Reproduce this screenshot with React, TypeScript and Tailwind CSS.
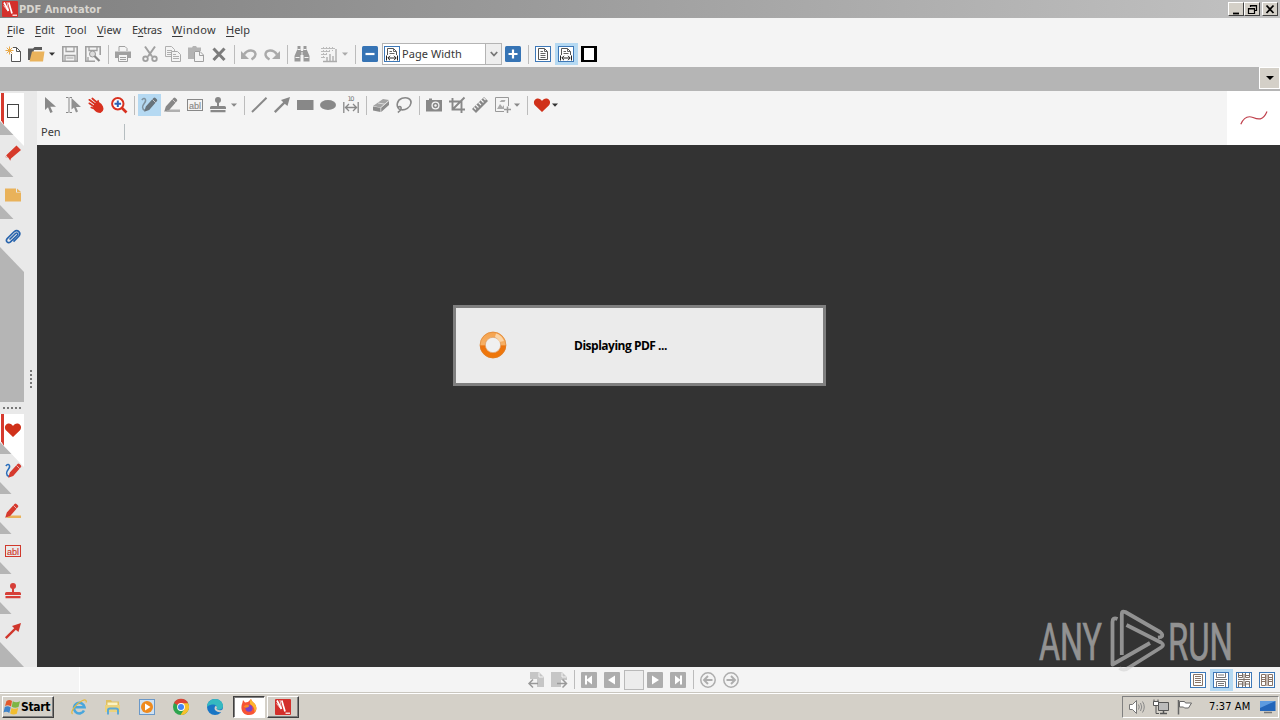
import React from "react";

type BoxProps = { children?: React.ReactNode; className?: string };

const Icon = ({ children, className = "" }: BoxProps) => (
  <svg viewBox="0 0 16 16" className={`h-4 w-4 shrink-0 overflow-visible ${className}`} fill="none">
    {children}
  </svg>
);

const Sep = () => <div className="-mr-px h-[19px] w-px shrink-0 bg-[#bcbcbc]" />;

const Caret = ({ className = "" }: BoxProps) => (
  <svg viewBox="0 0 6 4" className={`h-1 w-1.5 shrink-0 ${className}`}>
    <path d="M0 0.5h6L3 3.8z" fill="currentColor" />
  </svg>
);

const Active = ({ children }: BoxProps) => (
  <div className="-mr-1 -ml-[3px] flex h-[22px] w-[23px] shrink-0 items-center bg-[#b5d9f2] pl-[3px]">
    {children}
  </div>
);

const HEART = "M8 15L1.2 8.500C-.8 6.300-.3 3.100 2 2 4.300 1 6.800 1.900 8 4.100 9.200 1.900 11.700 1 14 2c2.300 1.100 2.800 4.300.8 6.500z";

const Logo = ({ className = "" }: BoxProps) => (
  <svg viewBox="0 0 16 16" className={`shrink-0 ${className}`} fill="none">
    <rect width="16" height="16" rx="1" fill="#d3302b" />
    <path d="M2 1.500l4.500 8.500M6.800 1.500l3.200 11" stroke="#fff" strokeWidth="1.700" />
    <path d="M5 1l1.500 9M1.500 4.500L6 10" stroke="#fff" strokeWidth=".7" />
    <path d="M10.500 14.200H15" stroke="#fff" strokeWidth="1.200" />
  </svg>
);

const PageIcon = ({ wide = false }: { wide?: boolean }) => (
  <Icon>
    <rect x=".5" y=".5" width="15" height="15" fill="#fff" stroke="#3d78b8" />
    <path d={wide ? "M3.500 9V2.500h6l3 3V9" : "M3.500 2.500h6l3 3v8h-9z"} stroke="#555" />
    <path d="M9.500 2.500v3h3M5.500 5.500h2.500M5.500 7.500h5" stroke="#666" />
    {wide ? (
      <path d="M2.500 9.500v5M13.500 9.500v5M4 12h8M6 9.800L3.800 12 6 14.200M10 9.800l2.200 2.200L10 14.200" stroke="#222" />
    ) : (
      <path d="M5.500 9.500h5M5.500 11.500h5" stroke="#666" />
    )}
  </Icon>
);

const AblIcon = ({ color }: { color: string }) => (
  <Icon>
    <rect x=".5" y="2.500" width="15" height="11" stroke={color} />
    <text x="2" y="11.500" fontSize="9" fontFamily="Liberation Sans, sans-serif" fill={color} stroke={color} strokeWidth=".15" textLength="12">
      abl
    </text>
  </Icon>
);

const StampIcon = ({ color }: { color: string }) => (
  <Icon>
    <circle cx="8" cy="3" r="3" fill={color} />
    <path d="M7 5h2v4h5.500q1.500 0 1.500 1.500V12H0v-1.500Q0 9 1.500 9H7zM.5 13h15v2.200H.5z" fill={color} />
  </Icon>
);

const PencilIcon = ({ color, line, wave }: { color: string; line?: string; wave?: string }) => (
  <Icon>
    {line && <path d="M5 12.500h11v2.500H1z" fill={line} />}
    {wave && <path d="M.8 3C4-.5 5.800 3 3.500 6S.5 12 4 13.500" stroke={wave} strokeWidth="1.500" />}
    <g transform={line ? "translate(-3 0)" : undefined}>
      <path d="M4.800 9.500L12.500 1q1-1 2 0l1.300 1.300q1 1 0 2L8.200 13 3.200 14.800z" fill={color} />
      <path d="M11.500 2.500l3.200 3.200" stroke="#f0e8e8" strokeWidth=".7" />
    </g>
  </Icon>
);

const ArrowIcon = ({ color }: { color: string }) => (
  <Icon>
    <path d="M.8 15.200L11 5" stroke={color} strokeWidth="2.400" />
    <path d="M16 0l-2.500 9-2.500-2-2-2-2-2z" fill={color} />
  </Icon>
);

const Menu = ({ label, u, className }: { label: string; u: number; className: string }) => (
  <div className={`shrink-0 whitespace-nowrap ${className}`}>
    {label.slice(0, u)}
    <span className="underline decoration-1 underline-offset-2">{label[u]}</span>
    {label.slice(u + 1)}
  </div>
);

function TitleBar() {
  return (
    <div className="flex h-[18px] items-center bg-linear-to-r from-[#808080] to-[#c2c2c2] pl-[2px]">
      <Logo className="h-4 w-4" />
      <div className="mt-px ml-px h-4 w-40 whitespace-nowrap font-['DejaVu_Sans_Condensed','DejaVu_Sans',sans-serif] text-[11px] leading-4 font-bold text-[#d8d5cf]">
        PDF Annotator
      </div>
      <div className="mr-[2px] ml-auto flex h-[14px]">
        {["M3 9.500h6", "M4.500 3V1.500h6v5H9M4.500 2h6M2.500 4.500h6v5h-6zM2.500 5h6", "M2.500 1.500l7 7.500M9.500 1.500l-7 7.500"].map((d, i) => (
          <div
            key={d}
            className={`flex h-[14px] w-4 items-center justify-center border border-t-white border-r-[#404040] border-b-[#404040] border-l-white bg-[#d4d0c8] ${i === 2 ? "ml-[2px]" : ""}`}
          >
            <svg viewBox="0 0 12 11" className="h-[11px] w-3" fill="none">
              <path d={d} stroke="#000" strokeWidth={i === 1 ? 1.2 : 1.8} />
            </svg>
          </div>
        ))}
      </div>
    </div>
  );
}

function MenuBar() {
  return (
    <div className="flex h-6 items-center pl-[7px] font-['Noto_Sans',sans-serif] text-[11px] text-[#383838]">
      <Menu label="File" u={0} className="w-7" />
      <Menu label="Edit" u={0} className="w-[30px]" />
      <Menu label="Tool" u={0} className="w-8" />
      <Menu label="View" u={0} className="w-[35px]" />
      <Menu label="Extras" u={1} className="w-10 tracking-[-0.35px]" />
      <Menu label="Window" u={0} className="w-[54px] tracking-[0.4px]" />
      <Menu label="Help" u={0} className="w-8" />
    </div>
  );
}

function MainToolbar() {
  return (
    <div className="flex h-[25px] items-center gap-[7px] pb-px pl-[5px]">
      {/* new */}
      <Icon>
        <path d="M6.500 8v7.500h9v-10l-4-4H8" fill="#fff" stroke="#555" />
        <path d="M11.500 1.500v4h4" stroke="#555" />
        <path d="M4.500.5v8M.5 4.500h8M1.700 1.700l5.600 5.600M7.300 1.700L1.700 7.300" stroke="#e9a846" />
      </Icon>
      {/* open */}
      <Icon>
        <path d="M0 14V2.500h5L6.500 1H14v3H6L3 14z" fill="#5b5b5b" />
        <path d="M4 5.500H16.500L15 15.500H1.500z" fill="#eab35c" />
      </Icon>
      <Caret className="-ml-0.5 text-[#333]" />
      {/* save */}
      <Icon>
        <path d="M.8.8h14.400v14.400H.8z" stroke="#a0a0a0" strokeWidth="1.600" />
        <path d="M4 1v4.500h8V1M3 15V9.500h10V15" stroke="#a0a0a0" strokeWidth="1.300" />
        <path d="M4.500 12h7" stroke="#a0a0a0" />
      </Icon>
      <Icon>
        <path d="M15.200 9V.8H.8v14.400H10" stroke="#a0a0a0" strokeWidth="1.600" />
        <path d="M4 1v3.500h8V1M3 15v-4" stroke="#a0a0a0" strokeWidth="1.300" />
        <circle cx="7.500" cy="8" r="3" fill="#ddd" stroke="#999" />
        <path d="M9.500 10l5 5" stroke="#888" strokeWidth="2.200" />
      </Icon>
      <Sep />
      {/* print */}
      <Icon>
        <path d="M4 5V.5h6l2 2V5" stroke="#a0a0a0" />
        <path d="M0 5.500h16V12h-3V9H3v3H0z" fill="#a0a0a0" />
        <path d="M3.500 9v6.500h9V9M5 11.500h6M5 13.500h6" stroke="#a0a0a0" />
      </Icon>
      {/* cut */}
      <Icon className="ml-1">
        <path d="M3 .5l7 10M13 .5l-7 10" stroke="#a0a0a0" strokeWidth="2" />
        <circle cx="3.500" cy="12.800" r="2.300" stroke="#a0a0a0" strokeWidth="1.800" />
        <circle cx="12.500" cy="12.800" r="2.300" stroke="#a0a0a0" strokeWidth="1.800" />
      </Icon>
      {/* copy */}
      <Icon>
        <path d="M.5.5h6l3 3v7h-9zM2 4.500h5M2 6.500h5M2 8.500h4" stroke="#b0b0b0" />
        <path d="M6.500 5.500h6l3 3v7h-9z" fill="#f4f4f4" stroke="#aaa" />
        <path d="M8 8.500h3M8 10.500h6M8 12.500h6" stroke="#b0b0b0" />
      </Icon>
      {/* paste */}
      <Icon>
        <path d="M0 1.500h4L5 0h3l1 1.500h4V5H6v8H0z" fill="#b4b4b4" />
        <path d="M6.500 5.500h5.500l3.500 3.500v6.500h-9z" fill="#f4f4f4" stroke="#a0a0a0" />
        <path d="M11.500 5.500v4h4" stroke="#a0a0a0" />
      </Icon>
      <Icon>
        <path d="M2.500 2.500l11 11.500M13.500 2.500L2.500 14" stroke="#7c7c7c" strokeWidth="3" />
      </Icon>
      <Sep />
      <Icon>
        <path d="M3 8.500C7 2.500 14 4 14.500 8c.2 2.500-1.500 4-4 5.500" stroke="#aaa" strokeWidth="2.400" />
        <path d="M0 5v8h8z" fill="#aaa" />
      </Icon>
      <Icon>
        <path d="M13 8.500C9 2.500 2 4 1.500 8c-.2 2.500 1.500 4 4 5.500" stroke="#aaa" strokeWidth="2.400" />
        <path d="M16 5v8H8z" fill="#aaa" />
      </Icon>
      <Sep />
      {/* find */}
      <Icon>
        <path d="M3.500 0h3v3L7 5h2l.5-2V0h3v3l3 7v5.500h-6V9h-3v6.500h-6V10l3-7z" fill="#999" />
        <path d="M1.500 11.500h4M10.500 11.500h4M3.500 3.500h3M9.500 3.500h3M8 6v3" stroke="#f4f4f4" />
      </Icon>
      <Icon className="ml-1">
        <path d="M0 2.500h14M0 5.500h9M0 8.500h6M0 11.500h4M2.500 1v12M5.500 1v9M8.500 1v6M11.500 1v4" stroke="#bbb" strokeDasharray="2 1" />
        <path d="M6 15v-4M9 15V8M12 15v-5M15 15V3M2 15.500h14" stroke="#aaa" strokeWidth="1.300" />
      </Icon>
      <Caret className="-ml-0.5 text-[#aaa]" />
      <Sep />
      <Icon>
        <rect width="16" height="16" rx="1.500" fill="#3674b5" />
        <path d="M3.500 8h9" stroke="#fff" strokeWidth="2.200" />
      </Icon>
      {/* zoom combo */}
      <div className="-ml-[3px] flex h-[22px] w-[120px] shrink-0 items-center border border-[#b4b4b4] bg-white pl-px">
        <PageIcon wide />
        <div className="ml-[2px] w-[83px] whitespace-nowrap font-['Noto_Sans',sans-serif] text-[11px] tracking-[0.05px] text-[#383838]">Page Width</div>
        <div className="flex h-full w-4 shrink-0 items-center justify-center border-l border-[#b4b4b4] bg-[#eee]">
          <svg viewBox="0 0 8 6" className="h-1.5 w-2" fill="none">
            <path d="M.8 1L4 4.500 7.200 1" stroke="#777" strokeWidth="1.800" />
          </svg>
        </div>
      </div>
      <Icon className="-ml-1">
        <rect width="16" height="16" rx="1.500" fill="#3674b5" />
        <path d="M3.500 8h9M8 3.500v9" stroke="#fff" strokeWidth="2.200" />
      </Icon>
      <Sep />
      <PageIcon />
      <Active>
        <PageIcon wide />
      </Active>
      <div className="h-4 w-4 border-2 border-x-[3px] border-black bg-white" />
    </div>
  );
}

function AnnotationToolbar() {
  return (
    <div className="flex h-7 items-center gap-[7px] pl-[5px]">
      <Icon>
        <path d="M3 0v13l3-2.700L8.300 16l2.400-1L8.300 9.800H14z" fill="#888" />
      </Icon>
      <Icon>
        <path d="M1 .5h2.500M4.500.5H7M4 1v14M1 15.500h2.500M4.500 15.500H7" stroke="#888" />
        <path d="M6.500 1v11.500l2.500-2 2 5 2-1-2-4.500H16z" fill="#909090" />
      </Icon>
      {/* hand */}
      <Icon>
        <path d="M1.300 2.800L7 7M1.300 6.300L6 9.500M3.300 10.500L7 12M4.300 1.500L9 5.500" stroke="#d8301f" strokeWidth="1.700" strokeLinecap="round" />
        <path d="M6.500 6.500L8.500 5 10 2.800q1.300.2 1 2.200 3 1.500 4 4.500 1 2-.2 4.500L12.500 16q-4 0-6.300-3L5 9.500z" fill="#d8301f" />
      </Icon>
      {/* magnifier */}
      <Icon>
        <circle cx="6.800" cy="6.800" r="5.700" fill="#fff" stroke="#d8301f" strokeWidth="2" />
        <path d="M11 11l4.500 4.500" stroke="#d8301f" strokeWidth="2.600" />
        <path d="M6.800 3.500v6.600M3.500 6.800h6.600" stroke="#2c62b5" strokeWidth="2" />
      </Icon>
      <Sep />
      <Active>
        <PencilIcon color="#68737b" wave="#7f919d" />
      </Active>
      <PencilIcon color="#888" line="#b0b0b0" />
      <AblIcon color="#888" />
      <StampIcon color="#888" />
      <Caret className="-ml-0.5 text-[#888]" />
      <Sep />
      <Icon>
        <path d="M1 15L15.500.8" stroke="#888" strokeWidth="2" />
      </Icon>
      <ArrowIcon color="#888" />
      <Icon>
        <rect y="3" width="16.500" height="10" fill="#888" />
      </Icon>
      <Icon>
        <ellipse cx="8" cy="8" rx="8" ry="5" fill="#888" />
      </Icon>
      {/* dimension */}
      <Icon>
        <path d="M.8 5v11M15.200 5v11M2 10.500h12M6 7l-3.500 3.500L6 14M10 7l3.500 3.500L10 14" stroke="#888" strokeWidth="1.300" />
        <text x="4.500" y="3.500" fontSize="6.500" fontFamily="DejaVu Sans, sans-serif" fill="#777" textLength="7">
          10
        </text>
      </Icon>
      <Sep />
      {/* eraser */}
      <Icon>
        <path d="M0 9L10 2l6 1-8.500 7.500z" fill="#a4a4a4" />
        <path d="M0 9.500l7.500 1.300V15L0 13.500zM8.200 10.800L16 4v4l-7.800 7z" fill="#8c8c8c" />
        <path d="M5 6l7 1.200" stroke="#ddd" />
      </Icon>
      {/* lasso */}
      <Icon>
        <path d="M3.500 12.500C-.5 9 1 3 6 1.300 11-.3 15.500 2 15 6c-.5 4-5.500 8-11 6.500-2-.6-2.200-3-.4-3 2.400.1 2 4-1.800 6" stroke="#888" strokeWidth="1.600" />
      </Icon>
      <Sep />
      {/* camera */}
      <Icon>
        <path d="M0 3h3V1.500h3V3h10v11.500H0z" fill="#888" />
        <circle cx="9.500" cy="8.500" r="3.400" fill="#888" stroke="#f4f4f4" strokeWidth="1.300" />
        <circle cx="9.500" cy="8.500" r="1.200" fill="#f4f4f4" />
      </Icon>
      {/* crop */}
      <Icon>
        <path d="M3.500 1v11.500H16M0 4.500h12.500V16M4 12L15.500.5" stroke="#888" strokeWidth="1.900" />
      </Icon>
      {/* ruler */}
      <Icon>
        <path d="M0 12L12 0l4 4L4 16z" fill="#888" />
        <path d="M4 8l2.500 2.500M6.500 5.500L9 8M9 3l2.500 2.500M11.500 1L13.500 3M2 10.500l2 2" stroke="#f4f4f4" strokeWidth="1.100" />
      </Icon>
      {/* insert image */}
      <Icon>
        <path d="M9 14.500H.5V.5h13V9" stroke="#999" />
        <path d="M2 12l3-5 2.500 3L9 8v4zM10.500 3h-4l-2 2h5z" fill="#aaa" />
        <path d="M12.500 9.500V16M9 12.500h7" stroke="#999" strokeWidth="1.500" />
      </Icon>
      <Caret className="-ml-1 text-[#888]" />
      <Sep />
      <Icon>
        <path d={HEART} fill="#d0311a" />
      </Icon>
      <Caret className="-ml-[5px] text-[#333]" />
    </div>
  );
}

const Tab = ({ children, className = "" }: BoxProps) => (
  <div className={`flex h-[53px] w-6 shrink-0 justify-center pl-[2px] [clip-path:polygon(0_0,100%_0,100%_100%,0_28px)] ${className}`}>
    {children}
  </div>
);

const Dots = ({ className = "" }: BoxProps) => (
  <div className={`flex justify-between ${className}`}>
    {[0, 1, 2, 3, 4].map((i) => (
      <div key={i} className="size-[2px] bg-[#777]" />
    ))}
  </div>
);

function Sidebar() {
  return (
    <div className="flex w-[37px] shrink-0 bg-[#e9e9e9]">
      <div className="flex w-6 flex-col">
        <div className="flex h-[311px] flex-col bg-[#b5b5b5]">
          <div className="h-0.5 shrink-0 bg-[#e9e9e9]" />
          <Tab className="relative z-10 -mb-[11px] bg-white pt-[10px]">
            <div className="absolute top-0 left-0 h-8 w-1 bg-[#d63a2e] [clip-path:polygon(25%_0,100%_0,100%_100%,25%_85%)]" />
            <Icon>
              <rect x="2.500" y="1.500" width="11" height="13" fill="#fff" stroke="#444" />
            </Icon>
          </Tab>
          <Tab className="-mb-[11px] bg-[#e9e9e9] pt-[10px]">
            {/* bookmark ribbon */}
            <Icon>
              <path d="M11.500.5L16 5 6 13.500l-.8 2.300-1.400-2.600L.2 12 2 9.500z" fill="#d63a2a" />
              <path d="M3.800 13.200L.2 12 1 10.500z" fill="#e9e9e9" />
            </Icon>
          </Tab>
          <Tab className="-mb-[11px] bg-[#e9e9e9] pt-[10px]">
            <Icon>
              <path d="M0 1.500h11v4h5v9H0z" fill="#e9b25a" />
              <path d="M12 1.500l4 3.500h-4z" fill="#e9b25a" />
            </Icon>
          </Tab>
          <Tab className="bg-[#e9e9e9] pt-[10px]">
            {/* paper clip */}
            <Icon>
              <path
                d="M4.500 10.500l6-6c1.500-1.300 3 .3 1.800 1.700l-6.800 6.600c-2.600 2.200-5.400-.6-3.300-3.200l6.800-6.800c3.600-3 7.700.9 4.800 4.400l-5.300 5.400"
                stroke="#2763ac"
                strokeWidth="1.600"
              />
            </Icon>
          </Tab>
        </div>
        <div className="flex h-3 items-center justify-center">
          <Dots className="w-[18px]" />
        </div>
        <div className="flex h-[253px] flex-col bg-[#b5b5b5]">
          <Tab className="relative z-10 -mb-[13px] bg-white pt-2">
            <div className="absolute top-0 left-0 h-8 w-1 bg-[#d63a2e] [clip-path:polygon(25%_0,100%_0,100%_100%,25%_85%)]" />
            <Icon>
              <path d={HEART} fill="#d0311a" />
            </Icon>
          </Tab>
          <Tab className="-mb-[13px] bg-[#e9e9e9] pt-[9px]">
            <PencilIcon color="#d63a2e" wave="#2a6ebb" />
          </Tab>
          <Tab className="-mb-[13px] bg-[#e9e9e9] pt-[9px]">
            <PencilIcon color="#d63a2e" line="#e9b25a" />
          </Tab>
          <Tab className="-mb-[13px] bg-[#e9e9e9] pt-[9px]">
            <AblIcon color="#d0392c" />
          </Tab>
          <Tab className="-mb-[13px] bg-[#e9e9e9] pt-[9px]">
            <StampIcon color="#d63f38" />
          </Tab>
          <Tab className="bg-[#e9e9e9] pt-[9px]">
            <ArrowIcon color="#d0362c" />
          </Tab>
        </div>
      </div>
      <div className="flex flex-1 justify-center pt-[279px]">
        <Dots className="h-[18px] flex-col" />
      </div>
    </div>
  );
}

function LoadingDialog() {
  return (
    <div className="mt-[160px] ml-[416px] flex h-[81px] w-[373px] items-center border-[3px] border-[#7f7f7f] bg-[#ebebeb] pl-[23px]">
      <svg viewBox="0 0 28 28" className="-mt-px h-7 w-7" fill="none">
        <defs>
          <linearGradient id="ring" x1="0" y1="0" x2="0" y2="1">
            <stop offset="0" stopColor="#f5a24c" />
            <stop offset=".48" stopColor="#f6b066" />
            <stop offset=".54" stopColor="#ec7410" />
            <stop offset="1" stopColor="#f07808" />
          </linearGradient>
        </defs>
        <path d="M14 .8a13.200 13.200 0 1 1 0 26.400a13.200 13.200 0 1 1 0-26.400zM14 6.300a7.700 7.700 0 1 0 0 15.400a7.700 7.700 0 1 0 0-15.400z" fill="url(#ring)" />
        <circle cx="14" cy="14" r="12.900" stroke="#d98232" strokeWidth=".6" />
        <circle cx="14" cy="14" r="7.700" fill="#f0f0f0" stroke="#d98232" strokeWidth=".6" />
        <path d="M17 2.500a12 12 0 0 1 8 7.500l-4.500 1A8 8 0 0 0 16 6z" fill="#fbd3a4" />
      </svg>
      <div className="ml-[67px] whitespace-nowrap font-['Open_Sans',sans-serif] text-[12px] font-bold tracking-[-0.49px] text-black">
        Displaying PDF ...
      </div>
    </div>
  );
}

const Watermark = () => (
  <svg viewBox="0 0 242 64" className="absolute right-0 -bottom-[5px] h-16 w-[242px] opacity-60" fill="none">
    <g fill="#d2d2d2" stroke="#d2d2d2" strokeWidth=".7" fontFamily="Roboto, sans-serif" fontSize="52.500">
      <text x="1" y="51.500" textLength="63" lengthAdjust="spacingAndGlyphs">ANY</text>
      <text x="130" y="51.500" textLength="65" lengthAdjust="spacingAndGlyphs">RUN</text>
    </g>
    <g stroke="#d2d2d2" strokeWidth="3.800" strokeLinejoin="round">
      <path d="M79.500 11q-5-2-5 3v42.500L112 35" />
      <path d="M83.800 47V6q0-3.500 3.500-2L122 24q4 3 1 5l-3 .5" />
      <path d="M88.500 17L123 34.500q4 2.500 0 5L91 59.500q-5 4-9.500.5" />
    </g>
  </svg>
);

const pageNav = ["M4 3.500h2v4l5-4v9l-5-4v4H4z", "M11 3.500v9L4 8z"];

const GreyButton = ({ d, flip = false }: { d: string; flip?: boolean }) => (
  <Icon className={flip ? "-scale-x-100" : ""}>
    <rect width="16" height="16" rx="1" fill="#adadad" />
    <path d={d} fill="#fff" />
  </Icon>
);

const ViewFrame = ({ children }: BoxProps) => (
  <Icon>
    <rect x=".5" y=".5" width="15" height="15" fill="#fff" stroke="#3d78b8" />
    {children}
  </Icon>
);

function StatusBar() {
  return (
    <div className="flex h-[26px] items-center border-b border-[#c9c6bf] bg-[#f4f4f4]">
      <div className="h-full w-20 border-r border-white" />
      <div className="ml-[448px] flex items-center gap-[7px]">
        <Icon>
          <path d="M2 0h9l5 5v10H9V7H2z" fill="#c6c6c6" />
          <path d="M11 .5v4.500h4.500" stroke="#f4f4f4" />
          <path d="M10 11.500H1.500M5 7.500l-4 4 4 4" stroke="#999" strokeWidth="1.500" />
        </Icon>
        <Icon>
          <path d="M0 0h11l5 5v3h-6v7H0z" fill="#c6c6c6" />
          <path d="M11 .5v4.500h4.500" stroke="#f4f4f4" />
          <path d="M6 11.500h9M11.500 7.500l4 4-4 4" stroke="#999" strokeWidth="1.500" />
        </Icon>
        <Sep />
        <GreyButton d={pageNav[0]} />
        <GreyButton d={pageNav[1]} />
        <div className="-mr-1 -ml-[3px] h-5 w-5 border border-[#b9b9b9] bg-[#ececec]" />
        <GreyButton d={pageNav[1]} flip />
        <GreyButton d={pageNav[0]} flip />
        <Sep />
        <Icon>
          <circle cx="8" cy="8" r="7.200" stroke="#adadad" strokeWidth="1.500" />
          <path d="M12.500 8H4.500M8 4L4 8l4 4" stroke="#adadad" strokeWidth="1.900" />
        </Icon>
        <Icon>
          <circle cx="8" cy="8" r="7.200" stroke="#adadad" strokeWidth="1.500" />
          <path d="M3.500 8h8M8 4l4 4-4 4" stroke="#adadad" strokeWidth="1.900" />
        </Icon>
      </div>
      <div className="mr-[5px] ml-auto flex items-center gap-[7px]">
        <ViewFrame>
          <path d="M3.500 2.500h9v11h-9zM5 4.500h6M5 6.500h6M5 8.500h6M5 10.500h6" stroke="#8a7567" />
        </ViewFrame>
        <Active>
          <ViewFrame>
            <path d="M3.500 1v4.500h9V1M5 3h6M2 7.500h12M3.500 15V9.500h9V15M5 11.500h6M5 13.500h6" stroke="#777" />
          </ViewFrame>
        </Active>
        <ViewFrame>
          <path d="M2.500 1v4.500h4V1M9.500 1v4.500h4V1M2 7.500h12M8 2v12M2.500 15V9.500h4V15M9.500 15V9.500h4V15M3 3.500h3M10 3.500h3M3 12h3M10 12h3" stroke="#7d7068" />
        </ViewFrame>
        <ViewFrame>
          <path d="M2.500 2.500h4v11h-4zM9.500 2.500h4v11h-4zM3 5.500h3M3 7.500h3M3 9.500h3M10 5.500h3M10 7.500h3M10 9.500h3M8 2v12" stroke="#8a7567" />
        </ViewFrame>
      </div>
    </div>
  );
}

function Taskbar() {
  return (
    <div className="flex h-[27px] items-start border-t border-white bg-[#d4d0c8] pt-[2px] pl-[2px]">
      <div className="flex h-[22px] w-[52px] items-center border border-t-white border-r-[#404040] border-b-[#404040] border-l-white pl-px shadow-[inset_-1px_-1px_#808080]">
        <Icon>
          <path d="M2.500 2q3-2 5.500 0L7 7.500Q4 5.500 1 7z" fill="#e2582b" />
          <path d="M8.800 2.300Q12 4 16 2.300L14.500 8Q11 9.500 7.700 7.800z" fill="#7db544" />
          <path d="M.8 8Q3.800 6.500 6.700 8.500L5.300 14Q2.500 12 -.5 13.500z" fill="#3f83c9" />
          <path d="M7.500 8.900q3.300 1.700 6.700.2L12.800 14.700q-3.500 1.500-6.600-.2z" fill="#f2bd2f" />
        </Icon>
        <span className="ml-px font-['DejaVu_Sans_Condensed','DejaVu_Sans',sans-serif] text-[12px] font-bold tracking-[-0.3px] text-black">Start</span>
      </div>
      <div className="ml-[17px] flex h-[22px] items-center gap-[18px]">
        {/* internet explorer */}
        <Icon>
          <path d="M13 11.500a5.300 5.300 0 1 1 .5-3.200H4" stroke="#49a6dc" strokeWidth="2.600" />
          <path d="M1.500 15C-1 13 5 4.500 11.500 1.500c3-1.300 4.500-.3 3.500 2" stroke="#e5b93d" strokeWidth="1.200" />
        </Icon>
        {/* explorer */}
        <Icon>
          <path d="M1 1h5l1 1.500h7V12H1z" fill="#e0c060" />
          <path d="M2.500 3.500h10v4h-10z" fill="#fbf3c4" />
          <path d="M0 6h15v7H0z" fill="#ecd27c" />
          <path d="M3 15.500V11q0-1.500 2-1.500h6q2 0 2 1.500v4.500" stroke="#5ba9d6" strokeWidth="2" />
        </Icon>
        {/* media player */}
        <Icon>
          <rect x=".5" y=".5" width="15" height="15" fill="#cfe1f2" stroke="#6a98c8" />
          <circle cx="8" cy="8" r="6" fill="#ef8a1d" />
          <path d="M6 4.500v7L11.500 8z" fill="#fff" />
        </Icon>
        {/* chrome */}
        <Icon>
          <circle cx="8" cy="8" r="8" fill="#2da44e" />
          <path d="M8 8L1 4A8 8 0 0 1 15 4z" fill="#dc4335" />
          <path d="M8 4.200h7.100A8 8 0 0 1 7.500 16l3.800-6z" fill="#f9c02c" />
          <circle cx="8" cy="8" r="3.900" fill="#fff" />
          <circle cx="8" cy="8" r="3" fill="#4285f4" />
        </Icon>
        {/* edge */}
        <Icon>
          <circle cx="8" cy="8" r="8" fill="#1976c5" />
          <path d="M0 8C0 3 4 0 8 0c5 0 8 3.500 8 7 0 3-3 4.300-6.500 3.300C11 7 8 5 5 5.500 2.500 6 .8 7 0 8z" fill="#35b9c0" />
          <path d="M9.500 7.500c-2.500 2 0 5.500 5.300 4.500l1.200-1" stroke="#d4d0c8" strokeWidth="2" />
        </Icon>
      </div>
      <div className="ml-[10px] flex h-[22px] w-8 items-center justify-center border border-t-[#404040] border-r-white border-b-white border-l-[#404040] bg-white shadow-[inset_1px_1px_#808080]">
        {/* firefox */}
        <Icon>
          <path d="M1.500 3.500L2 1l2 2.500L7 3l3-3c.5 2 2 3 3.500 4.500C18 10 14 16 8 16S-1.500 10.500 1.500 3.500z" fill="#f75435" />
          <path d="M10 0c.5 2 2 3 3.500 4.500 2.500 3 2.300 6.500 0 9C14 9 12 7 9.500 5.500 8.500 3.500 8.500 2 10 0z" fill="#fdb72d" />
          <circle cx="8" cy="9.300" r="3.500" fill="#7b45c8" />
          <path d="M2.500 7.500q3.500-3 6-.5-1.500 2-4 1.800" fill="#fa8a26" />
        </Icon>
      </div>
      <div className="ml-[2px] flex h-[22px] w-8 items-center justify-center border border-t-white border-r-[#404040] border-b-[#404040] border-l-white shadow-[inset_-1px_-1px_#808080]">
        <Logo className="h-4 w-4" />
      </div>
      {/* tray */}
      <div className="mr-px ml-auto flex h-[22px] w-[157px] items-center border border-t-[#808080] border-r-white border-b-white border-l-[#808080] pl-[6px]">
        <Icon>
          <path d="M.5 5.500h3l4-4v13l-4-4h-3z" fill="#fff" stroke="#777" />
          <path d="M9.500 5.500q1.500 2.500 0 5M11.500 4q2.500 4 0 8M13.500 2.500q3.500 5.500 0 11" stroke="#888" />
        </Icon>
        <Icon className="ml-2">
          <path d="M5.500 3.500h10v8h-10z" fill="#bbb" stroke="#555" />
          <path d="M7 14.500h7M10.500 12v2" stroke="#555" strokeWidth="1.500" />
          <path d="M1 .5v3h4v-3M3 3.500v11h3" stroke="#555" />
          <path d="M.5 2.500h5v4h-5z" fill="#fff" stroke="#555" />
        </Icon>
        <Icon className="ml-2">
          <path d="M1.500 1v14.500" stroke="#666" strokeWidth="1.500" />
          <path d="M2.500 2.500h5l1 1.500h6l-3 5h-4l-1-1H2.500z" fill="#fff" stroke="#666" />
        </Icon>
        <div className="mt-px ml-4 w-[43px] whitespace-nowrap font-['DejaVu_Sans_Condensed','DejaVu_Sans',sans-serif] text-[11px] tracking-[0.1px] text-black">7:37 AM</div>
        <Icon className="ml-[8px]">
          <path d="M0 2h15.500v10H0z" fill="#2366ba" />
          <path d="M0 2h15.500L0 9z" fill="#5c9be0" />
          <path d="M4 13.500h8" stroke="#777" strokeWidth="1.500" />
        </Icon>
      </div>
    </div>
  );
}

export default function App() {
  return (
    <div className="flex h-[720px] w-[1280px] flex-col overflow-hidden bg-[#f4f4f4]">
      <TitleBar />
      <MenuBar />
      <MainToolbar />
      <div className="flex h-6 justify-end bg-[#b5b5b5]">
        <div className="flex h-[22px] w-[21px] items-center justify-center border border-white bg-[#d4d0c8]">
          <svg viewBox="0 0 8 4" className="h-1 w-2">
            <path d="M0 0h8L4 4z" fill="#000" />
          </svg>
        </div>
      </div>
      <div className="flex h-[576px]">
        <Sidebar />
        <div className="relative flex flex-1 flex-col">
          <div className="flex h-[54px]">
            <div className="flex-1">
              <AnnotationToolbar />
              <div className="flex h-[26px] items-center pl-1">
                <div className="w-[83px] font-['Noto_Sans',sans-serif] text-[11px] text-[#383838]">Pen</div>
                <div className="h-4 w-px bg-[#b5bdc0]" />
              </div>
            </div>
            <div className="flex w-[53px] items-center justify-center bg-white">
              <svg viewBox="0 0 28 14" className="h-[14px] w-7" fill="none">
                <path d="M.8 13.200C4 6 8 4.500 13 6.500s10 3.500 14-6" stroke="#c0404c" strokeWidth="1.200" />
              </svg>
            </div>
          </div>
          <div className="flex-1 bg-[#333]">
            <LoadingDialog />
          </div>
          <Watermark />
        </div>
      </div>
      <StatusBar />
      <Taskbar />
    </div>
  );
}
